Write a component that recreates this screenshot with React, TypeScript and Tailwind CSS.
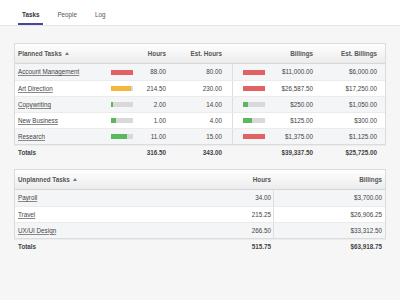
import React from "react";

const font = { fontFamily: '"Liberation Sans", Arial, sans-serif' };

type Bar = { color: string; w: number };

const planned: { name: string; b1: Bar; h: string; eh: string; b2: Bar; bill: string; ebill: string }[] = [
  { name: "Account Management", b1: { color: "bg-[#e06262]", w: 22 }, h: "88.00", eh: "80.00", b2: { color: "bg-[#e06262]", w: 22 }, bill: "$11,000.00", ebill: "$6,000.00" },
  { name: "Art Direction", b1: { color: "bg-[#f5b73b]", w: 20 }, h: "214.50", eh: "230.00", b2: { color: "bg-[#e06262]", w: 22 }, bill: "$26,587.50", ebill: "$17,250.00" },
  { name: "Copywriting", b1: { color: "bg-[#5cb85c]", w: 2 }, h: "2.00", eh: "14.00", b2: { color: "bg-[#5cb85c]", w: 5 }, bill: "$250.00", ebill: "$1,050.00" },
  { name: "New Business", b1: { color: "bg-[#5cb85c]", w: 5 }, h: "1.00", eh: "4.00", b2: { color: "bg-[#5cb85c]", w: 9 }, bill: "$125.00", ebill: "$300.00" },
  { name: "Research", b1: { color: "bg-[#5cb85c]", w: 16 }, h: "11.00", eh: "15.00", b2: { color: "bg-[#e06262]", w: 22 }, bill: "$1,375.00", ebill: "$1,125.00" },
];

const unplanned = [
  { name: "Payroll", h: "34.00", bill: "$3,700.00" },
  { name: "Travel", h: "215.25", bill: "$26,906.25" },
  { name: "UX/UI Design", h: "266.50", bill: "$33,312.50" },
];

function MiniBar({ b }: { b: Bar }) {
  return (
    <div className="h-[5px] w-[22px] bg-[#d9d9d9]">
      <div className={`h-full ${b.color}`} style={{ width: b.w }} />
    </div>
  );
}

function Arrow() {
  return (
    <svg width="4" height="3" viewBox="0 0 4 3" className="ml-[3px] inline-block">
      <path d="M0 3 L2 0 L4 3 Z" fill="#777" />
    </svg>
  );
}

const g1 = "grid grid-cols-[96px_22px_33px_56px_11px_10px_22px_48px_64px_8px]";
const g2 = "grid grid-cols-[196px_60px_3px_111px]";

export default function App() {
  return (
    <div className="w-[400px] h-[300px] bg-[#f6f6f6] text-[6.3px] text-[#444] overflow-hidden" style={font}>
      {/* tabs */}
      <div className="h-[26px] bg-white border-b border-[#e4e4e4] flex items-end pl-[18px] gap-[10px]">
        <div className="h-[25px] px-[4px] flex items-end pb-[4px] border-b-2 border-[#46479a] font-bold text-[#333]">Tasks</div>
        <div className="h-[25px] px-[4px] flex items-end pb-[6px] text-[#555]">People</div>
        <div className="h-[25px] px-[4px] flex items-end pb-[6px] text-[#555]">Log</div>
      </div>

      <div className="pt-[17px] pl-[14px]">
        {/* planned */}
        <div className="w-[372px] border border-[#dcdcdc] shadow-[0_1px_1px_rgba(0,0,0,0.04)] bg-white">
          <div className={`${g1} h-[20px] border-b border-[#d6d6d6] bg-gradient-to-b from-white to-[#ececec] font-bold text-[#555]`}>
            <div className="col-span-2 flex items-center pl-[3px]">Planned Tasks<Arrow /></div>
            <div className="flex items-center justify-end">Hours</div>
            <div className="flex items-center justify-end">Est. Hours</div>
            <div />
            <div />
            <div />
            <div className="flex items-center justify-end">Billings</div>
            <div className="flex items-center justify-end">Est. Billings</div>
            <div />
          </div>
          {planned.map((r, i) => (
            <div key={r.name} className={`${g1} h-[16px] ${i > 0 ? "border-t border-[#ebebeb]" : ""} ${i % 2 === 0 ? "bg-[#f4f5f7]" : "bg-white"}`}>
              <div className="flex items-center pl-[3px]"><span className="underline decoration-[#888]">{r.name}</span></div>
              <div className="flex items-center"><MiniBar b={r.b1} /></div>
              <div className="flex items-center justify-end">{r.h}</div>
              <div className="flex items-center justify-end">{r.eh}</div>
              <div className="border-r border-[#dedede]" />
              <div />
              <div className="flex items-center"><MiniBar b={r.b2} /></div>
              <div className="flex items-center justify-end">{r.bill}</div>
              <div className="flex items-center justify-end">{r.ebill}</div>
              <div />
            </div>
          ))}
        </div>
        <div className={`${g1} w-[372px] px-[1px] h-[16px] font-bold text-[#444]`}>
          <div className="col-span-2 flex items-center pl-[3px]">Totals</div>
          <div className="flex items-center justify-end">316.50</div>
          <div className="flex items-center justify-end">343.00</div>
          <div />
          <div />
          <div />
          <div className="flex items-center justify-end">$39,337.50</div>
          <div className="flex items-center justify-end">$25,725.00</div>
          <div />
        </div>

        {/* unplanned */}
        <div className="mt-[8px] w-[372px] border border-[#dcdcdc] shadow-[0_1px_1px_rgba(0,0,0,0.04)] bg-white">
          <div className={`${g2} h-[20px] border-b border-[#d6d6d6] bg-gradient-to-b from-white to-[#ececec] font-bold text-[#555]`}>
            <div className="flex items-center pl-[3px]">Unplanned Tasks<Arrow /></div>
            <div className="flex items-center justify-end">Hours</div>
            <div />
            <div className="flex items-center justify-end pr-[3px]">Billings</div>
          </div>
          {unplanned.map((r, i) => (
            <div key={r.name} className={`${g2} h-[16px] ${i > 0 ? "border-t border-[#ebebeb]" : ""} ${i % 2 === 0 ? "bg-[#f4f5f7]" : "bg-white"}`}>
              <div className="flex items-center pl-[3px]"><span className="underline decoration-[#888]">{r.name}</span></div>
              <div className="flex items-center justify-end">{r.h}</div>
              <div className="border-r border-[#dedede]" />
              <div className="flex items-center justify-end pr-[3px]">{r.bill}</div>
            </div>
          ))}
        </div>
        <div className={`${g2} w-[372px] px-[1px] h-[16px] font-bold text-[#444]`}>
          <div className="flex items-center pl-[3px]">Totals</div>
          <div className="flex items-center justify-end">515.75</div>
          <div />
          <div className="flex items-center justify-end pr-[3px]">$63,918.75</div>
        </div>
      </div>
    </div>
  );
}
